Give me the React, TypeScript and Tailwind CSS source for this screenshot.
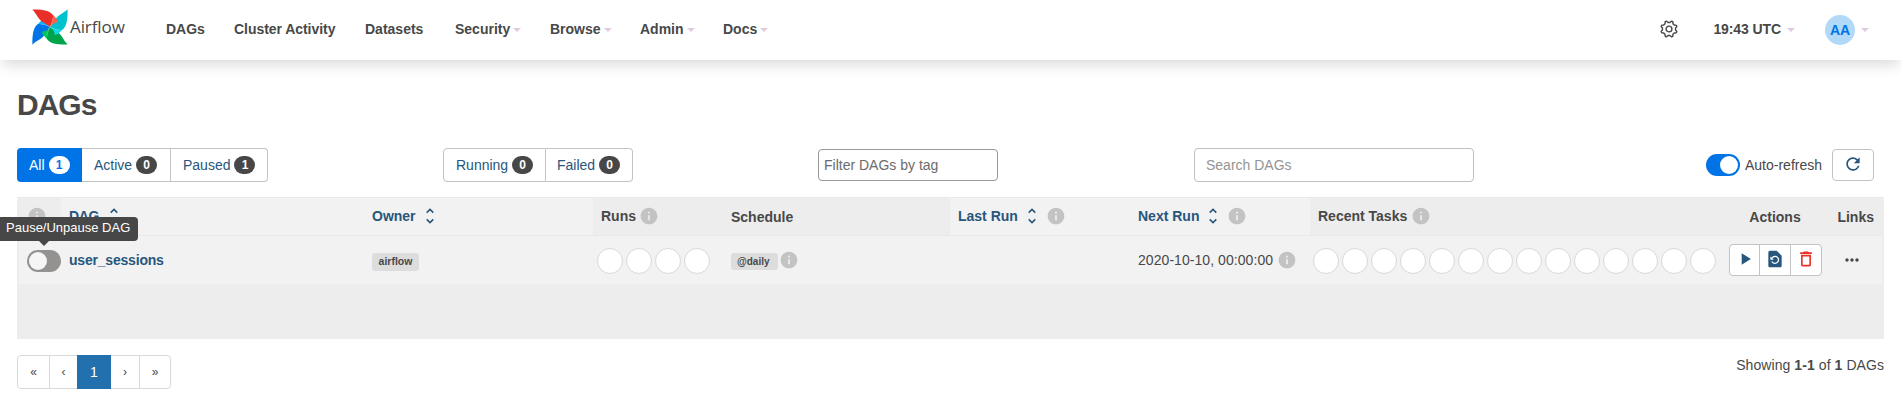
import type { ReactNode } from "react";
import { MdRefresh, MdPlayArrow, MdRestorePage, MdDeleteOutline, MdMoreHoriz, MdInfo } from "react-icons/md";

const Info = () => <MdInfo className="size-5 shrink-0 text-[#c3c3c3]" />;

const Caret = () => (
  <svg className="h-1 w-2 shrink-0 text-[#e2cbe0]" viewBox="0 0 8 4">
    <path d="M0 0h8L4 4z" fill="currentColor" />
  </svg>
);

const Sort = ({ down = true }: { down?: boolean }) => (
  <svg className="h-4 w-2 shrink-0" viewBox="0 0 8 16" fill="none" stroke="#28567c" strokeWidth="1.6">
    <path d="M0.7 4.6 4 1.4l3.3 3.2" />
    {down && <path d="M0.7 11.4 4 14.6l3.3-3.2" />}
  </svg>
);

const Circles = ({ count }: { count: number }) => (
  <div className="flex gap-[3px]">
    {Array.from({ length: count }, (_, i) => (
      <span key={i} className="size-[26px] rounded-full border border-[#d9d9d9] bg-white" />
    ))}
  </div>
);

const Badge = ({ value, light }: { value: number; light?: boolean }) => (
  <span
    className={`flex h-[18px] w-[21px] items-center justify-center rounded-full text-xs font-bold ${
      light ? "bg-white text-[#0073e6]" : "bg-[#484747] text-white"
    }`}
  >
    {value}
  </span>
);

const FilterButton = ({ label, value, className }: { label: string; value: number; className: string }) => (
  <button className={`flex h-[34px] items-center gap-1 ${className}`}>
    <span>{label}</span>
    <Badge value={value} light={label === "All"} />
  </button>
);

const NavItem = ({ label, caret, className }: { label: string; caret?: boolean; className: string }) => (
  <a className={`flex shrink-0 items-center gap-[3px] ${className}`}>
    {label}
    {caret && <span className="pt-0.5"><Caret /></span>}
  </a>
);

const BLADES = [
  { angle: 270, dark: "#0073e6", light: "#0cb6ff" },
  { angle: 180, dark: "#00a44a", light: "#04c659" },
  { angle: 90, dark: "#00c2cf", light: "#11d8e4" },
  { angle: 0, dark: "#ea2f28", light: "#ff6350" },
];

const Logo = () => (
  <svg className="size-9" viewBox="0 0 36 36">
    {BLADES.map(({ angle, dark, light }) => (
      <g key={angle} transform={`rotate(${angle} 18 18)`}>
        <path d="M.3.4C11 .2 18 1.500 21 6C21.300 10 20 14 18 18C15 15 9.500 13.500 6.500 9C4.500 6 3 3 .3.4z" fill={dark} />
        <path d="M21 6C24 8.500 25.500 11 26 13.200C22.500 13.500 19.500 15 18 18C20 14 21.300 10 21 6z" fill={light} />
      </g>
    ))}
  </svg>
);

const gearPoint = (degrees: number, radius: number) => {
  const a = (degrees * Math.PI) / 180;
  return `${(9 + radius * Math.sin(a)).toFixed(2)},${(9 - radius * Math.cos(a)).toFixed(2)}`;
};

const GEAR_OUTLINE = Array.from({ length: 8 }, (_, i) => i * 45)
  .flatMap((a) => [gearPoint(a - 8, 6.6), gearPoint(a + 8, 6.6), gearPoint(a + 17, 8.2), gearPoint(a + 28, 8.2)])
  .join(" ");

const Gear = () => (
  <svg className="size-[18px]" viewBox="0 0 18 18" fill="none" stroke="#484848" strokeWidth="1.4" strokeLinejoin="round">
    <polygon points={GEAR_OUTLINE} />
    <circle cx="9" cy="9" r="2.9" />
  </svg>
);

const COLS = "grid grid-cols-[44px_303px_229px_130px_227px_180px_180px_411px_98px_65px]";

const Head = ({ children, className = "pl-2" }: { children?: ReactNode; className?: string }) => (
  <div className={`flex items-center ${className}`}>{children}</div>
);

const SortableInfo = ({ label }: { label: string }) => (
  <Head className="bg-[#f2f2f2] pb-0.5 pl-2 text-[#28567c]">
    <span className="mr-[10px]">{label}</span>
    <Sort />
    <span className="ml-[10px]"><Info /></span>
  </Head>
);

export default function App() {
  return (
    <div className="h-[412px] w-[1901px] overflow-hidden bg-white font-['Liberation_Sans',Arial,sans-serif] text-sm leading-5 text-[#484848]">
      <header className="flex h-[60px] items-start bg-white shadow-[0_6px_14px_-2px_rgba(0,0,0,0.16)]">
        <div className="flex w-[166px] shrink-0 items-center pt-[9px] pl-8">
          <Logo />
          <span className="pl-[2px] font-['Open_Sans',sans-serif] text-[17px] tracking-[-0.1px]">Airflow</span>
        </div>
        <nav className="flex flex-1 items-center pt-[19px] font-bold">
          <NavItem label="DAGs" className="w-[68px]" />
          <NavItem label="Cluster Activity" className="w-[131px] tracking-[-0.05px]" />
          <NavItem label="Datasets" className="w-[90px]" />
          <NavItem label="Security" caret className="w-[95px]" />
          <NavItem label="Browse" caret className="w-[90px]" />
          <NavItem label="Admin" caret className="w-[83px]" />
          <NavItem label="Docs" caret className="w-[60px]" />
        </nav>
        <div className="flex h-[60px] items-center pr-8 font-bold">
          <span className="pb-[3px]"><Gear /></span>
          <span className="pr-1.5 pl-[35px] pb-0.5 tracking-[-0.1px]">19:43 UTC</span>
          <Caret />
          <span className="mr-1.5 ml-[30px] flex size-[30px] items-center justify-center rounded-full bg-[#b3d9f8] text-[#0073e6]">AA</span>
          <Caret />
        </div>
      </header>

      <main className="px-[17px]">
        <h1 className="pt-7 text-[30px] leading-[34px] font-bold tracking-[-1px]">DAGs</h1>

        <div className="mt-[26px] flex h-[34px] items-center text-[#28567c]">
          <div className="flex">
            <FilterButton label="All" value={1} className="w-[65px] rounded-l bg-[#0073e6] pl-3 text-white" />
            <FilterButton label="Active" value={0} className="w-[89px] border-y border-r border-[#c3c3c3] pl-3" />
            <FilterButton label="Paused" value={1} className="w-[97px] rounded-r border-y border-r border-[#c3c3c3] pl-3" />
          </div>
          <div className="ml-[175px] flex">
            <FilterButton label="Running" value={0} className="w-[103px] rounded-l border border-[#c3c3c3] pl-3" />
            <FilterButton label="Failed" value={0} className="w-[87px] rounded-r border-y border-r border-[#c3c3c3] pl-[11px]" />
          </div>
          <div className="ml-[185px] flex h-8 w-[180px] items-center rounded border border-[#999] pl-[5px] text-[#6b6b6b]">Filter DAGs by tag</div>
          <div className="ml-[196px] flex h-[34px] w-[280px] items-center rounded border border-[#bfbfbf] pl-[11px] text-[#949494]">Search DAGs</div>
          <div className="ml-[232px] flex h-[22px] w-[34px] items-center justify-end rounded-full bg-[#0073e6] pr-0.5">
            <span className="size-[18px] rounded-full bg-white" />
          </div>
          <span className="w-[92px] pb-px pl-[5px] text-[#484848]">Auto-refresh</span>
          <button className="flex h-8 w-[42px] items-center justify-center rounded border border-[#c3c3c3] pb-0.5">
            <MdRefresh className="size-5" />
          </button>
        </div>

        <section className="mt-[15px] h-[142px] rounded-t-sm bg-[#ededed]">
          <div className={`${COLS} h-[39px] border-t border-b border-[#e9e9e9] font-bold`}>
            <Head className="pb-0.5 pl-[10px]"><Info /></Head>
            <Head className="gap-[11px] bg-[#f2f2f2] pb-0.5 pl-2 text-[#28567c]"><span className="tracking-[-0.3px]">DAG</span><Sort down={false} /></Head>
            <Head className="gap-[10px] bg-[#f2f2f2] pb-0.5 pl-2 text-[#28567c]">Owner <Sort /></Head>
            <Head className="gap-[3px] pb-0.5 pl-2">Runs <Info /></Head>
            <Head>Schedule</Head>
            <SortableInfo label="Last Run" />
            <SortableInfo label="Next Run" />
            <Head className="gap-1 pb-0.5 pl-2">Recent Tasks <Info /></Head>
            <Head className="justify-center pl-[10px]">Actions</Head>
            <Head className="justify-end pr-[10px]">Links</Head>
          </div>
          <div className="mx-0.5 h-12 bg-[#f2f2f2]">
            <div className={`${COLS} -mx-0.5 h-12 items-center`}>
              <div className="relative mt-px ml-[10px] flex h-[22px] w-[34px] items-center rounded-full bg-[#949290] pl-0.5">
                <span className="size-[18px] rounded-full bg-[#f5f5f5]" />
                <div className="absolute -top-[33px] -left-[30px] z-10 h-6 w-[141px] rounded-[4px] bg-[#484747] pt-px pl-[9px] text-[13px] whitespace-nowrap text-white">
                  Pause/Unpause DAG
                  <svg className="absolute top-6 left-[42px] h-[5px] w-[10px]" viewBox="0 0 10 5"><path d="M0 0h10L5 5z" fill="#484747" /></svg>
                </div>
              </div>
              <div className="pl-2 font-bold tracking-[-0.2px] text-[#28567c]">user_sessions</div>
              <div className="pl-2"><span className="mt-[3px] flex h-[18px] w-[47px] items-center justify-center rounded-[3px] bg-[#dddddd] pb-px text-[10.5px] font-bold">airflow</span></div>
              <div className="pt-px pl-1"><Circles count={4} /></div>
              <div className="flex items-center gap-px pl-2"><span className="mt-[3px] flex h-[17px] w-[47px] items-center rounded-[3px] bg-[#dddddd] pl-1.5 text-[10px] font-bold">@daily</span><Info /></div>
              <div />
              <div className="flex items-center gap-1 pl-2 tracking-[0.06px] whitespace-nowrap">2020-10-10, 00:00:00 <Info /></div>
              <div className="pt-px pl-[3px]"><Circles count={14} /></div>
              <div className="ml-2 flex h-8 w-[93px] rounded border border-[#c3c3c3] bg-white text-[#28567c]">
                <button className="flex w-[30px] items-center justify-center border-r border-[#c3c3c3] pb-0.5"><MdPlayArrow className="size-5" /></button>
                <button className="flex w-[31px] items-center justify-center border-r border-[#c3c3c3] pb-0.5"><MdRestorePage className="size-5" /></button>
                <button className="flex w-[30px] items-center justify-center pb-0.5 text-[#e9332a]"><MdDeleteOutline className="size-5" /></button>
              </div>
              <div className="pl-[23px]"><MdMoreHoriz className="size-5" /></div>
            </div>
          </div>
        </section>

        <footer className="mt-4 flex items-start justify-between">
          <div className="flex h-[34px] w-[154px] rounded border border-[#d9d9d9] text-xs">
            <span className="flex w-8 items-center justify-center border-r border-[#d9d9d9]">«</span>
            <span className="flex w-[27px] items-center justify-center">‹</span>
            <span className="-my-px flex w-[34px] items-center justify-center bg-[#2370ae] text-sm text-white">1</span>
            <span className="flex w-[29px] items-center justify-center border-r border-[#d9d9d9]">›</span>
            <span className="flex w-[30px] items-center justify-center">»</span>
          </div>
          <p className="tracking-[0.07px]">Showing <b>1-1</b> of <b>1</b> DAGs</p>
        </footer>
      </main>
    </div>
  );
}
